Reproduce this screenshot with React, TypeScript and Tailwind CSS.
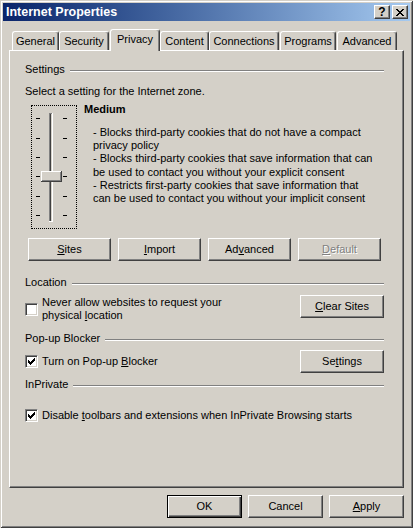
import React from "react";

type BtnProps = {
  children: React.ReactNode;
  w?: string;
  disabled?: boolean;
  isDefault?: boolean;
};

function Btn({ children, w = "w-[83px]", disabled, isDefault }: BtnProps) {
  const frame = isDefault
    ? "border border-black shadow-[inset_1px_1px_0_#fff,inset_-1px_-1px_0_#404040,inset_-2px_-2px_0_#808080]"
    : "border border-t-white border-l-white border-r-[#404040] border-b-[#404040] shadow-[inset_-1px_-1px_0_#808080]";
  return (
    <div
      className={`${w} h-[23px] shrink-0 flex items-center justify-center ${frame} ${
        disabled ? "text-[#808080] [text-shadow:1px_1px_0_#fff]" : ""
      }`}
    >
      {children}
    </div>
  );
}

function Check({ checked }: { checked?: boolean }) {
  return (
    <div className="w-[13px] h-[13px] shrink-0 bg-white border border-t-[#808080] border-l-[#808080] border-r-white border-b-white shadow-[inset_1px_1px_0_#404040,inset_-1px_-1px_0_#d4d0c8] flex items-center justify-center">
      {checked && (
        <svg width="7" height="7" viewBox="0 0 7 7" shapeRendering="crispEdges">
          <rect x="0" y="2" width="1" height="3" fill="#000" />
          <rect x="1" y="3" width="1" height="3" fill="#000" />
          <rect x="2" y="4" width="1" height="3" fill="#000" />
          <rect x="3" y="3" width="1" height="3" fill="#000" />
          <rect x="4" y="2" width="1" height="3" fill="#000" />
          <rect x="5" y="1" width="1" height="3" fill="#000" />
          <rect x="6" y="0" width="1" height="3" fill="#000" />
        </svg>
      )}
    </div>
  );
}

function Group({ title }: { title: string }) {
  return (
    <div className="flex items-center h-[13px]">
      <span className="whitespace-nowrap">{title}</span>
      <div className="flex-1 ml-[5px] mt-[2px] h-[2px] border-t border-t-[#808080] border-b border-b-white" />
    </div>
  );
}

function Tab({ label, w, sel, ml }: { label: string; w: string; sel?: boolean; ml?: string }) {
  if (sel) {
    return (
      <div
        className={`${w} ${ml ?? ""} h-[22px] mb-[-1px] relative z-10 bg-[#d4d0c8] border-t border-l border-t-white border-l-white border-r border-r-[#404040] shadow-[inset_-1px_0_0_#808080] rounded-t-[3px] flex items-start justify-center pt-[3px]`}
      >
        {label}
      </div>
    );
  }
  return (
    <div
      className={`${w} ${ml ?? ""} h-[19px] border-t border-l border-t-white border-l-white border-r border-r-[#404040] shadow-[inset_-1px_0_0_#808080] rounded-t-[3px] flex items-start justify-center pt-[3px]`}
    >
      {label}
    </div>
  );
}

function Slider() {
  const ticks = [12, 32, 51, 70, 90, 109];
  return (
    <div className="ml-[6px] w-[46px] h-[124px] shrink-0 border border-dotted border-black">
      <svg width="44" height="122" viewBox="0 0 44 122" shapeRendering="crispEdges">
        {ticks.map((y) => (
          <g key={y}>
            <rect x="4" y={y} width="4" height="1" fill="#000" />
            <rect x="31" y={y} width="4" height="1" fill="#000" />
          </g>
        ))}
        {/* channel */}
        <rect x="17" y="7" width="4" height="109" fill="#d4d0c8" />
        <rect x="17" y="7" width="1" height="109" fill="#808080" />
        <rect x="17" y="7" width="4" height="1" fill="#808080" />
        <rect x="18" y="8" width="1" height="107" fill="#404040" />
        <rect x="20" y="7" width="1" height="109" fill="#fff" />
        <rect x="17" y="115" width="4" height="1" fill="#fff" />
        {/* thumb */}
        <rect x="9" y="65" width="21" height="11" fill="#d4d0c8" />
        <rect x="9" y="65" width="20" height="1" fill="#fff" />
        <rect x="9" y="65" width="1" height="10" fill="#fff" />
        <rect x="9" y="75" width="21" height="1" fill="#404040" />
        <rect x="29" y="65" width="1" height="11" fill="#404040" />
        <rect x="10" y="74" width="19" height="1" fill="#808080" />
        <rect x="28" y="66" width="1" height="9" fill="#808080" />
      </svg>
    </div>
  );
}

function TitleBar() {
  return (
    <div className="h-[18px] shrink-0 bg-gradient-to-r from-[#0a246a] to-[#a6caf0] flex items-center justify-between pl-[3px] pr-[2px]">
      <span className="text-white font-bold text-[12.5px] leading-[14px]">Internet Properties</span>
      <div className="flex gap-[2px]">
        <div className="w-[16px] h-[14px] bg-[#d4d0c8] border border-t-white border-l-white border-r-[#404040] border-b-[#404040] shadow-[inset_-1px_-1px_0_#808080] flex items-center justify-center font-bold text-[12px] leading-[12px]">
          ?
        </div>
        <div className="w-[16px] h-[14px] bg-[#d4d0c8] border border-t-white border-l-white border-r-[#404040] border-b-[#404040] shadow-[inset_-1px_-1px_0_#808080] flex items-center justify-center">
          <svg width="8" height="7" viewBox="0 0 8 7" shapeRendering="crispEdges">
            <path
              d="M0 0h2v1H0zM6 0h2v1H6zM1 1h2v1H1zM5 1h2v1H5zM2 2h4v1H2zM3 3h2v1H3zM2 4h4v1H2zM1 5h2v1H1zM5 5h2v1H5zM0 6h2v1H0zM6 6h2v1H6z"
              fill="#000"
            />
          </svg>
        </div>
      </div>
    </div>
  );
}

export default function App() {
  return (
    <div className="w-[413px] h-[528px] bg-[#d4d0c8] p-[3px] flex flex-col font-['Liberation_Sans',Arial,sans-serif] text-[11px] leading-[13px] text-black shadow-[inset_1px_1px_0_#d4d0c8,inset_-1px_-1px_0_#404040,inset_2px_2px_0_#fff,inset_-2px_-2px_0_#808080]">
      <TitleBar />

      <div className="mt-[8px] h-[21px] shrink-0 flex items-end pl-[9px]">
        <Tab label="General" w="w-[47px]" />
        <Tab label="Security" w="w-[50px]" />
        <Tab label="Privacy" w="w-[50px]" ml="ml-[1px]" sel />
        <Tab label="Content" w="w-[49px]" />
        <Tab label="Connections" w="w-[70px]" />
        <Tab label="Programs" w="w-[56px]" ml="ml-[1px]" />
        <Tab label="Advanced" w="w-[60px]" ml="ml-[1px]" />
      </div>

      <div className="ml-[6px] w-[395px] h-[438px] shrink-0 border border-t-white border-l-white border-r-[#404040] border-b-[#404040] shadow-[inset_-1px_-1px_0_#808080] pl-[15px] pr-[19px] flex flex-col">
        <div className="mt-[12px]">
          <Group title="Settings" />
        </div>
        <div className="mt-[9px]">Select a setting for the Internet zone.</div>

        <div className="mt-[7px] flex items-start">
          <Slider />
          <div className="ml-[7px] mt-[-2px]">
            <div className="font-bold">Medium</div>
            <div className="mt-[10px] pl-[9px] leading-[13.2px] whitespace-nowrap">
              - Blocks third-party cookies that do not have a compact
              <br />
              privacy policy
              <br />
              - Blocks third-party cookies that save information that can
              <br />
              be used to contact you without your explicit consent
              <br />
              - Restricts first-party cookies that save information that
              <br />
              can be used to contact you without your implicit consent
            </div>
          </div>
        </div>

        <div className="mt-[9px] ml-[3px] flex gap-[7px]">
          <Btn>
            <u>S</u>ites
          </Btn>
          <Btn>
            <u>I</u>mport
          </Btn>
          <Btn>
            Ad<u>v</u>anced
          </Btn>
          <Btn disabled>
            <u>D</u>efault
          </Btn>
        </div>

        <div className="mt-[15px]">
          <Group title="Location" />
        </div>
        <div className="mt-[6px] flex items-start justify-between">
          <div className="mt-[1px] flex items-center">
            <Check />
            <div className="ml-[4px]">
              Never allow websites to request your
              <br />
              physical <u>l</u>ocation
            </div>
          </div>
          <Btn w="w-[84px]">
            <u>C</u>lear Sites
          </Btn>
        </div>

        <div className="mt-[10px]">
          <Group title="Pop-up Blocker" />
        </div>
        <div className="mt-[5px] flex items-center justify-between">
          <div className="flex items-center">
            <Check checked />
            <div className="ml-[4px]">
              Turn on Pop-up <u>B</u>locker
            </div>
          </div>
          <Btn w="w-[84px]">
            Se<u>t</u>tings
          </Btn>
        </div>

        <div className="mt-[5px]">
          <Group title="InPrivate" />
        </div>
        <div className="mt-[18px] flex items-center">
          <Check checked />
          <div className="ml-[4px]">
            Disable <u>t</u>oolbars and extensions when InPrivate Browsing starts
          </div>
        </div>
      </div>

      <div className="mt-[7px] flex justify-end gap-[6px] pr-[6px]">
        <Btn w="w-[75px]" isDefault>
          OK
        </Btn>
        <Btn w="w-[75px]">Cancel</Btn>
        <Btn w="w-[75px]">
          <u>A</u>pply
        </Btn>
      </div>
    </div>
  );
}
